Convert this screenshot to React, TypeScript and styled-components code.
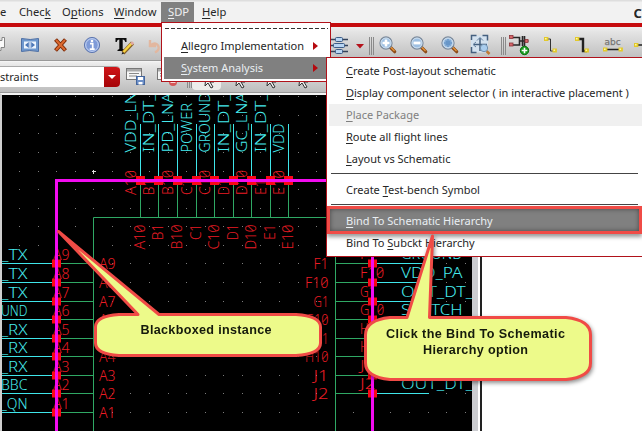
import React from 'react';
import styled, { createGlobalStyle } from 'styled-components';

const Global = createGlobalStyle`
  * { box-sizing: border-box; }
  body { margin: 0; background: #fff; overflow: hidden; }
`;

const Window = styled.div`
  position: relative;
  width: 642px;
  height: 431px;
  display: flex;
  flex-direction: column;
  overflow: hidden;
  background: #fff;
  font: 11px/16px 'Noto Sans', sans-serif;
  color: #262626;
`;

const MenuBar = styled.nav`
  display: flex;
  height: 23px;
  flex: none;
  padding-top: 2px;
  background: linear-gradient(#dedede 0 1px, #f2f2f2 2px);
`;

const MenuTitle = styled.span<{ $width: number; $open?: boolean; $gap?: number }>`
  width: ${(p) => p.$width}px;
  height: 20px;
  line-height: 20px;
  padding-left: ${(p) => p.$gap ?? 0}px;
  white-space: nowrap;
  font-size: 11.2px;
  background: ${(p) => (p.$open ? '#808080' : 'transparent')};
  color: ${(p) => (p.$open ? '#f0f0f0' : '#262626')};
`;

const Key = styled.span`
  text-decoration: underline;
  text-underline-offset: 2px;
  text-decoration-thickness: 1px;
  text-decoration-skip-ink: none;
`;

const WindowTitle = styled.b`
  margin-left: auto;
  width: 8.5px;
  overflow: hidden;
  font-size: 13px;
  line-height: 23px;
`;

const Accent = styled.div`
  flex: none;
  height: 4px;
  background: #c60b0e;
`;

const ToolRow = styled.div<{ $height: number }>`
  flex: none;
  display: flex;
  height: ${(p) => p.$height}px;
  overflow: hidden;
  border-bottom: 1px solid #999;
  background: linear-gradient(#efefef, #e4e4e4 15%, #bdbdbd);
  & + & { border-top: 1px solid #f4f4f4; }
`;

const Icons = styled.svg`
  display: block;
  flex: none;
`;

const Combo = styled.div`
  display: flex;
  flex: none;
  width: 120px;
  height: 21px;
  margin-top: 4px;
  background: #fff;
  border-radius: 0 4px 4px 0;
  overflow: hidden;
  border-top: 1px solid #aaa;
  line-height: 19px;
`;

const ComboText = styled.span`
  flex: 1;
  font-size: 11px;
`;

const ComboButton = styled.span`
  display: grid;
  place-items: center;
  width: 16px;
  background: linear-gradient(#cf1518, #a50408);
`;

const Canvas = styled.main`
  display: flex;
  flex: 1;
  border-top: 2px solid #f4f4f4;
  border-left: 2px solid #cfcfcf;
`;

const Vector = styled.text<{ $tone: 'net' | 'pin' }>`
  font: 300 15.2px 'Noto Sans', sans-serif;
  font-feature-settings: 'zero';
  fill: ${(p) => (p.$tone === 'net' ? '#46eaee' : '#ea1c24')};
`;

const Scroll = styled.div`
  width: 6px;
  background: #cbccd0;
`;

const Edge = styled.div`
  width: 4px;
  border-right: 2px solid #222;
`;

const Menu = styled.div<{ $left: number; $top: number; $width: number; $height: number }>`
  position: absolute;
  left: ${(p) => p.$left}px;
  top: ${(p) => p.$top}px;
  width: ${(p) => p.$width}px;
  height: ${(p) => p.$height}px;
  padding: 2px;
  border: 1px solid #b0121a;
  background: #fff;
`;

const TearOff = styled.div`
  height: 10px;
  margin: 0 0 0 1px;
  background: repeating-linear-gradient(90deg, #333 0 4px, transparent 4px 6px) 0 3px / 100% 1px no-repeat;
`;

const Item = styled.div<{ $state?: 'active' | 'disabled' | 'marked'; $indent?: number }>`
  display: flex;
  align-items: center;
  justify-content: space-between;
  height: 22px;
  padding: 0 10px 1px ${(p) => p.$indent ?? 17}px;
  white-space: nowrap;
  color: ${(p) => (p.$state === 'disabled' ? '#7f7f7f' : p.$state ? '#e9eef2' : '#262626')};
  background: ${(p) =>
    p.$state === 'disabled' ? '#f0f0f0' : p.$state ? '#808080' : 'transparent'};
  ${(p) =>
    p.$state === 'marked' &&
    `position: relative;
     height: 28px;
     margin: -4px 0 -2px -2px;
     padding-left: 16px;
     padding-bottom: 0;
     padding-top: 1px;
     border: 3px solid #f04b46;
     box-shadow: 0 3px 4px rgba(0,0,0,.4), inset 0 0 5px rgba(0,0,0,.45);`}
`;

const Divider = styled.div<{ $above: number }>`
  height: 9px;
  margin: 0 4px 0 2px;
  background: linear-gradient(#444, #444) 0 ${(p) => p.$above}px / 100% 1px no-repeat;
`;

const Overlay = styled.svg`
  position: absolute;
  inset: 0;
  filter: drop-shadow(1px 2px 2px rgba(0, 0, 0, 0.45));
`;

const NoteText = styled.text`
  font: bold 12.6px 'Liberation Sans', Arial, sans-serif;
  fill: #151a0c;
`;

const rows = [263.5, 282.5, 301.5, 319.5, 338.5, 356.5, 375.5, 393.5, 412.5];
const leftNets = ['_TX', '_TX', '_TX', 'UND', '_RX', '_RX', '_RX', 'BBC', '_QN'];
const rightPins = ['F1', 'F10', 'G1', 'G10', 'H1', 'H10', 'J1', 'J2'];
const rightNets = ['GROUND', 'VDD_PA', 'OUT_DT_', 'SWITCH', '', '', '', 'OUT_DT_'];
const topX = [140.5, 158.5, 177.5, 196.5, 214.5, 233.5, 251.5, 270.5, 288.5];
const topNets = ['VDD_LNA', 'IN_DT_', 'PD_LNA', 'POWER', 'GROUND', 'IN_DT_', 'GC_LNA', 'IN_DT_', 'VDD'];
const topPins = ['A10', 'B1', 'B10', 'C1', 'C10', 'D1', 'D10', 'E1', 'E10'];
const gridX = Array.from({ length: 25 }, (_, i) => Math.round(19 + i * 18.57));
const gridY = Array.from({ length: 18 }, (_, i) => Math.round(96.3 + i * 18.57));

type LabelProps = { x: number; y: number; text: string; tone: 'net' | 'pin'; step?: number; end?: boolean; up?: boolean };

function Label({ x, y, text, tone, step = 9.8, end, up }: LabelProps) {
  return (
    <Vector
      $tone={tone}
      x={x}
      y={y}
      textAnchor={end ? 'end' : 'start'}
      textLength={text.length * step - 2}
      lengthAdjust="spacingAndGlyphs"
      transform={up ? `rotate(-90 ${x} ${y})` : undefined}
    >
      {text}
    </Vector>
  );
}

function Schematic() {
  return (
    <Icons width="470" height="336" viewBox="2 95 470 336">
      <rect x="2" y="95" width="470" height="336" fill="#000" />
      {gridY.map((y) => gridX.map((x) => <rect key={`${x}-${y}`} x={x} y={y} width="1" height="1" fill="#7d7d7d" />))}
      <path d="M93.5 431V217.5H335.5V431" fill="none" stroke="#2fa864" />
      <path d="M92 171.5h4M93.5 170v4" stroke="#ddd" />
      {topX.map((x, i) => (
        <g key={x}>
          <path d={`M${x} 124V178`} stroke="#3fe6ea" />
          <path d={`M${x} 183V217`} stroke="#2fa864" />
          <rect x={x - 4.5} y="176" width="9" height="9" fill="#fb0714" />
          <Label x={x - 5} y={152.5} text={topNets[i]} tone="net" step={10.3} up />
          <Label x={x - 5} y={195} text={topPins[i]} tone="pin" step={9} up />
          <Label x={x + 4.5} y={topPins[i].length > 2 ? 249.5 : 240} text={topPins[i]} tone="pin" step={9} up />
        </g>
      ))}
      {rows.map((y, i) => (
        <g key={y}>
          <path d={`M2 ${y}H52`} stroke="#3fe6ea" />
          <path d={`M58 ${y}H93`} stroke="#2fa864" />
          <rect x="52" y={y - 4} width="9" height="8" fill="#fb0714" />
          <Label x={27.5} y={y - 3.5} text={leftNets[i]} tone="net" step={9.5} end />
          <Label x={53} y={y - 3.5} text={`A${9 - i}`} tone="pin" step={9.3} />
          <Label x={99} y={y + 5.5} text={`A${9 - i}`} tone="pin" step={9.3} />
        </g>
      ))}
      {rightPins.map((pin, i) => (
        <g key={pin}>
          <path d={`M335 ${rows[i]}H371`} stroke="#2fa864" />
          <path d={`M375 ${rows[i]}H429`} stroke="#3fe6ea" />
          <rect x="368" y={rows[i] - 4} width="9" height="8" fill="#fb0714" />
          <Label x={328.5} y={rows[i] + 5.5} text={pin} tone="pin" step={8.5} end />
          <Label x={360} y={rows[i] - 4.5} text={pin} tone="pin" step={8.7} />
          {rightNets[i] && <Label x={401} y={rows[i] - 4.5} text={rightNets[i]} tone="net" step={10.6} />}
        </g>
      ))}
      <path d="M56.5 431V180.5H372.5V431" fill="none" stroke="#f30cf0" strokeWidth="3" />
    </Icons>
  );
}

function Grip({ x, y, h = 18 }: { x: number; y: number; h?: number }) {
  return <path d={`M${x} ${y}v${h}m2 0v${-h}m2 0v${h}`} stroke="#8a8a8a" fill="none" />;
}

function Lens({ x, kind }: { x: number; kind: 'in' | 'out' | 'fit' }) {
  return (
    <g transform={`translate(${x} 36)`}>
      <path d="M10.5 10.5l5.2 5.2" stroke="#8c4a17" strokeWidth="3.2" strokeLinecap="round" />
      <path d="M11 10.5l4.5 4.5" stroke="#e7963b" strokeWidth="1.3" />
      <circle cx="7" cy="7" r="6" fill="#9dbfe2" stroke="#7c8b9d" strokeWidth="1.3" />
      <circle cx="7" cy="7" r="5" fill="none" stroke="#d8e6f3" strokeWidth=".9" />
      {kind === 'in' && <path d="M3.5 7h7M7 3.5v7" stroke="#fff" strokeWidth="2.6" />}
      {kind === 'out' && <path d="M3.5 7h7" stroke="#fff" strokeWidth="2.8" />}
      {kind === 'fit' && <path d="M7 3v8M3 7h8M4.500 4.500l5 5M9.500 4.500l-5 5" fill="none" stroke="#6796c8" strokeWidth="1.5" />}
    </g>
  );
}

function Dots({ at }: { at: number[][] }) {
  return (
    <>
      {at.map(([x, y]) => (
        <g key={`${x}-${y}`}>
          <rect x={x} y={y} width="4.4" height="4" fill="#e2c92b" />
          <rect x={x + 1} y={y + 1} width="1.6" height="1.5" fill="#fff8a5" />
        </g>
      ))}
    </>
  );
}

function MainTools() {
  return (
    <Icons width="642" height="33" viewBox="0 27 642 33">
      <path d="M-4 40.500H2V37.500H4.500V47.500H1V50.500H-4" fill="#fafafa" stroke="#858585" />
      <path d="M21.500 38.500q9 2 17 0v13q-9-2-17 0z" fill="#6f98ce" stroke="#4d6fa5" />
      <rect x="24" y="41.500" width="12" height="7" fill="#eef5fd" />
      <path d="M25 45l3.800-3v6zM35 45l-3.800-3v6z" fill="#4d78b8" />
      <path d="M30 42v6" stroke="#4d78b8" strokeWidth=".7" />
      <path d="M55.500 39.500l10 11M65.500 39.500l-10 11" stroke="#7d2b08" strokeWidth="4" />
      <path d="M56 40l9 10M65 40l-9 10" stroke="#dc6930" strokeWidth="2" />
      <circle cx="92" cy="45" r="7.600" fill="#7f9bd8" stroke="#6078b0" />
      <circle cx="92" cy="45" r="6.300" fill="none" stroke="#c9d7f4" />
      <path d="M90 43.700h2.700v5.200M89.700 49.200h5" stroke="#fff" strokeWidth="1.700" fill="none" />
      <circle cx="92" cy="41" r="1.300" fill="#fff" />
      <path d="M115.500 38H126.500V42H125.300Q124.800 39.500 123 39.500H122.700V49L124.500 50V51H117.500V50L119.300 49V39.500H119Q117 39.500 116.700 42H115.500z" fill="#0b0b0b" />
      <path d="M123 53l9.500-10" stroke="#855d24" strokeWidth="4" />
      <path d="M123.500 52l8-8.500" stroke="#f8d541" strokeWidth="2.500" />
      <path d="M131.200 44.200l2-2" stroke="#dfa9a3" strokeWidth="3" />
      <path d="M121.500 54.500l1-2.500 1.600 1.600z" fill="#222" />
      <path d="M150 40v6h6M150.500 45.500q5-4 7.500 0t-3 7" fill="none" stroke="#e2b79f" strokeWidth="2.400" />
      <path d="M331 39.500H348M331 45.500H348M331 51.500H348" stroke="#35435b" strokeWidth="1.500" />
      <g fill="#b9d6f3" stroke="#3d5d88">
        <rect x="335.500" y="37.500" width="7" height="4" rx="1" />
        <rect x="333.500" y="43.500" width="11" height="4" rx="1" />
        <rect x="335.500" y="49.500" width="7" height="4" rx="1" />
      </g>
      <path d="M356 44h8l-4 4.500z" fill="#b5121b" />
      <Grip x={369.500} y={37} />
      <Lens x={379} kind="in" />
      <Lens x={410} kind="out" />
      <Lens x={441} kind="fit" />
      <rect x="471" y="35.500" width="17" height="17" fill="#d4e2ef" />
      <path d="M471.500 40v-4.500h5M482.500 35.500h5v5M471.500 47v5.500h5M474 44.500h13M480 38v13" fill="none" stroke="#45607f" strokeWidth="1.500" />
      <path d="M477 40.500l3-3 3 3M476 42l-3 2.500 3 2.500" fill="none" stroke="#63809f" />
      <path d="M486.500 51l3 3" stroke="#c17a33" strokeWidth="2.500" />
      <circle cx="484" cy="48" r="3.700" fill="#a9cdee" stroke="#7190ad" />
      <Grip x={501.500} y={37} />
      <path d="M513 37.500h6.500V45H513M522.500 36v10M519.500 41h9M524.500 36v10" fill="none" stroke="#272727" strokeWidth="1.600" />
      <g fill="#d6676c" stroke="#8c3439" strokeWidth=".8">
        <rect x="509.500" y="35.500" width="3.500" height="3" />
        <rect x="509.500" y="43" width="3.500" height="3" />
        <rect x="525" y="39.500" width="3" height="3" />
      </g>
      <circle cx="524.500" cy="50.500" r="4.200" fill="#199b20" stroke="#08720c" />
      <path d="M521.700 50.500h5.600M524.500 47.700v5.600" stroke="#fff" strokeWidth="1.600" />
      <path d="M547 39h3.500v12h4" stroke="#333" fill="none" />
      <Dots at={[[544, 37], [552.500, 48.500]]} />
      <path d="M578 39h5v12h4" stroke="#222" strokeWidth="2.400" fill="none" />
      <Dots at={[[575, 37], [584.500, 48.500]]} />
      <text x="604.500" y="44.500" fontFamily="DejaVu Sans" fontSize="9" fill="#777" stroke="#777" strokeWidth=".25">abc</text>
      <path d="M605 49.500h17M635 45h7" stroke="#222" strokeWidth="1.300" />
      <Dots at={[[603, 47.500], [618.500, 47.500], [634, 43]]} />
    </Icons>
  );
}

function Sheet({ x, alert }: { x: number; alert?: boolean }) {
  return (
    <g transform={`translate(${x} 68)`}>
      <rect x=".5" y=".5" width="15" height="11" fill="#f6f6f6" stroke="#777" />
      <rect x="1" y="1" width="14" height="2.500" fill="#aaa" />
      <path d="M3 5.500h10M3 8h8" stroke="#888" />
      {alert ? (
        <>
          <circle cx="16" cy="14" r="4" fill="#d65858" />
          <path d="M13.500 14h5" stroke="#fff" strokeWidth="1.500" />
        </>
      ) : (
        <>
          <rect x="10.500" y="8.500" width="8" height="8" fill="#6c8fc7" stroke="#45669d" />
          <path d="M12 9h5v3h-5zM12.500 14h4v2.500h-4z" fill="#fff" />
        </>
      )}
    </g>
  );
}

function EditTools() {
  return (
    <Icons width="522" height="31" viewBox="120 62 522 31">
      <Sheet x={126} />
      <Sheet x={157} alert />
      <Grip x={187.5} y={70} />
      <rect x="192" y="66" width="29" height="24" rx="4" fill="#ededeb" />
      {[206, 237, 268, 300].map((x) => (
        <path key={x} d={`M${x} 75l8 7h-4l3 5-2 1-3-5-3 3z`} fill="#eee" stroke="#333" />
      ))}
    </Icons>
  );
}

function Arrow() {
  return (
    <Icons width="5" height="8" viewBox="0 0 5 8">
      <path d="M0 0l5 4-5 4z" fill="#b5090f" />
    </Icons>
  );
}

export default function App() {
  return (
    <Window>
      <Global />
      <MenuBar>
        <MenuTitle $width={19}>e</MenuTitle>
        <MenuTitle $width={43}>Chec<Key>k</Key></MenuTitle>
        <MenuTitle $width={52}>O<Key>p</Key>tions</MenuTitle>
        <MenuTitle $width={47}><Key>W</Key>indow</MenuTitle>
        <MenuTitle $width={33} $gap={7} $open><Key>S</Key>DP</MenuTitle>
        <MenuTitle $width={40} $gap={8}><Key>H</Key>elp</MenuTitle>
        <WindowTitle>C</WindowTitle>
      </MenuBar>
      <Accent />
      <ToolRow $height={34}><MainTools /></ToolRow>
      <ToolRow $height={32}>
        <Combo>
          <ComboText>straints</ComboText>
          <ComboButton>
            <Icons width="8" height="4" viewBox="0 0 8 4"><path d="M0 0h8L4 4z" fill="#fff" /></Icons>
          </ComboButton>
        </Combo>
        <EditTools />
      </ToolRow>
      <Canvas>
        <Schematic />
        <Scroll />
        <Edge />
      </Canvas>

      <Menu $left={161} $top={22} $width={170} $height={60}>
        <TearOff />
        <Item><span><Key>A</Key>llegro Implementation</span><Arrow /></Item>
        <Item $state="active"><span><Key>S</Key>ystem Analysis</span><Arrow /></Item>
      </Menu>

      <Menu $left={326} $top={57} $width={319} $height={200}>
        <Item><span><Key>C</Key>reate Post-layout schematic</span></Item>
        <Item><span><Key>D</Key>isplay component selector ( in interactive placement )</span></Item>
        <Item $state="disabled"><span><Key>P</Key>lace Package</span></Item>
        <Item><span><Key>R</Key>oute all flight lines</span></Item>
        <Item><span><Key>L</Key>ayout vs Schematic</span></Item>
        <Divider $above={3} />
        <Item><span>Create <Key>T</Key>est-bench Symbol</span></Item>
        <Divider $above={3} />
        <Item $state="marked"><span><Key>B</Key>ind To Schematic Hierarchy</span></Item>
        <Item><span>Bind To <Key>S</Key>ubckt Hierarchy</span></Item>
      </Menu>

      <Overlay width="642" height="431">
        <g fill="#edfa8a" stroke="#f04b46" strokeWidth="3" strokeLinejoin="round">
          <path d="M58.500 231.500L159 314.500H296Q320.500 316 320.500 327V343Q320.500 354 296 355.500H119Q95.500 354 95.500 343V327Q95.500 316 119 314.500H138Z" />
          <path d="M432.500 236L429.500 317.500H566Q590.500 320 590.500 335V363Q590.500 377 566 379.500H390Q365.500 377 365.500 363V335Q365.500 320 390 317.500H407Z" />
        </g>
        <NoteText x="140.500" y="334" textLength="131">Blackboxed instance</NoteText>
        <NoteText x="386" y="338" textLength="179">Click the Bind To Schematic</NoteText>
        <NoteText x="423" y="354" textLength="105">Hierarchy option</NoteText>
      </Overlay>
    </Window>
  );
}
